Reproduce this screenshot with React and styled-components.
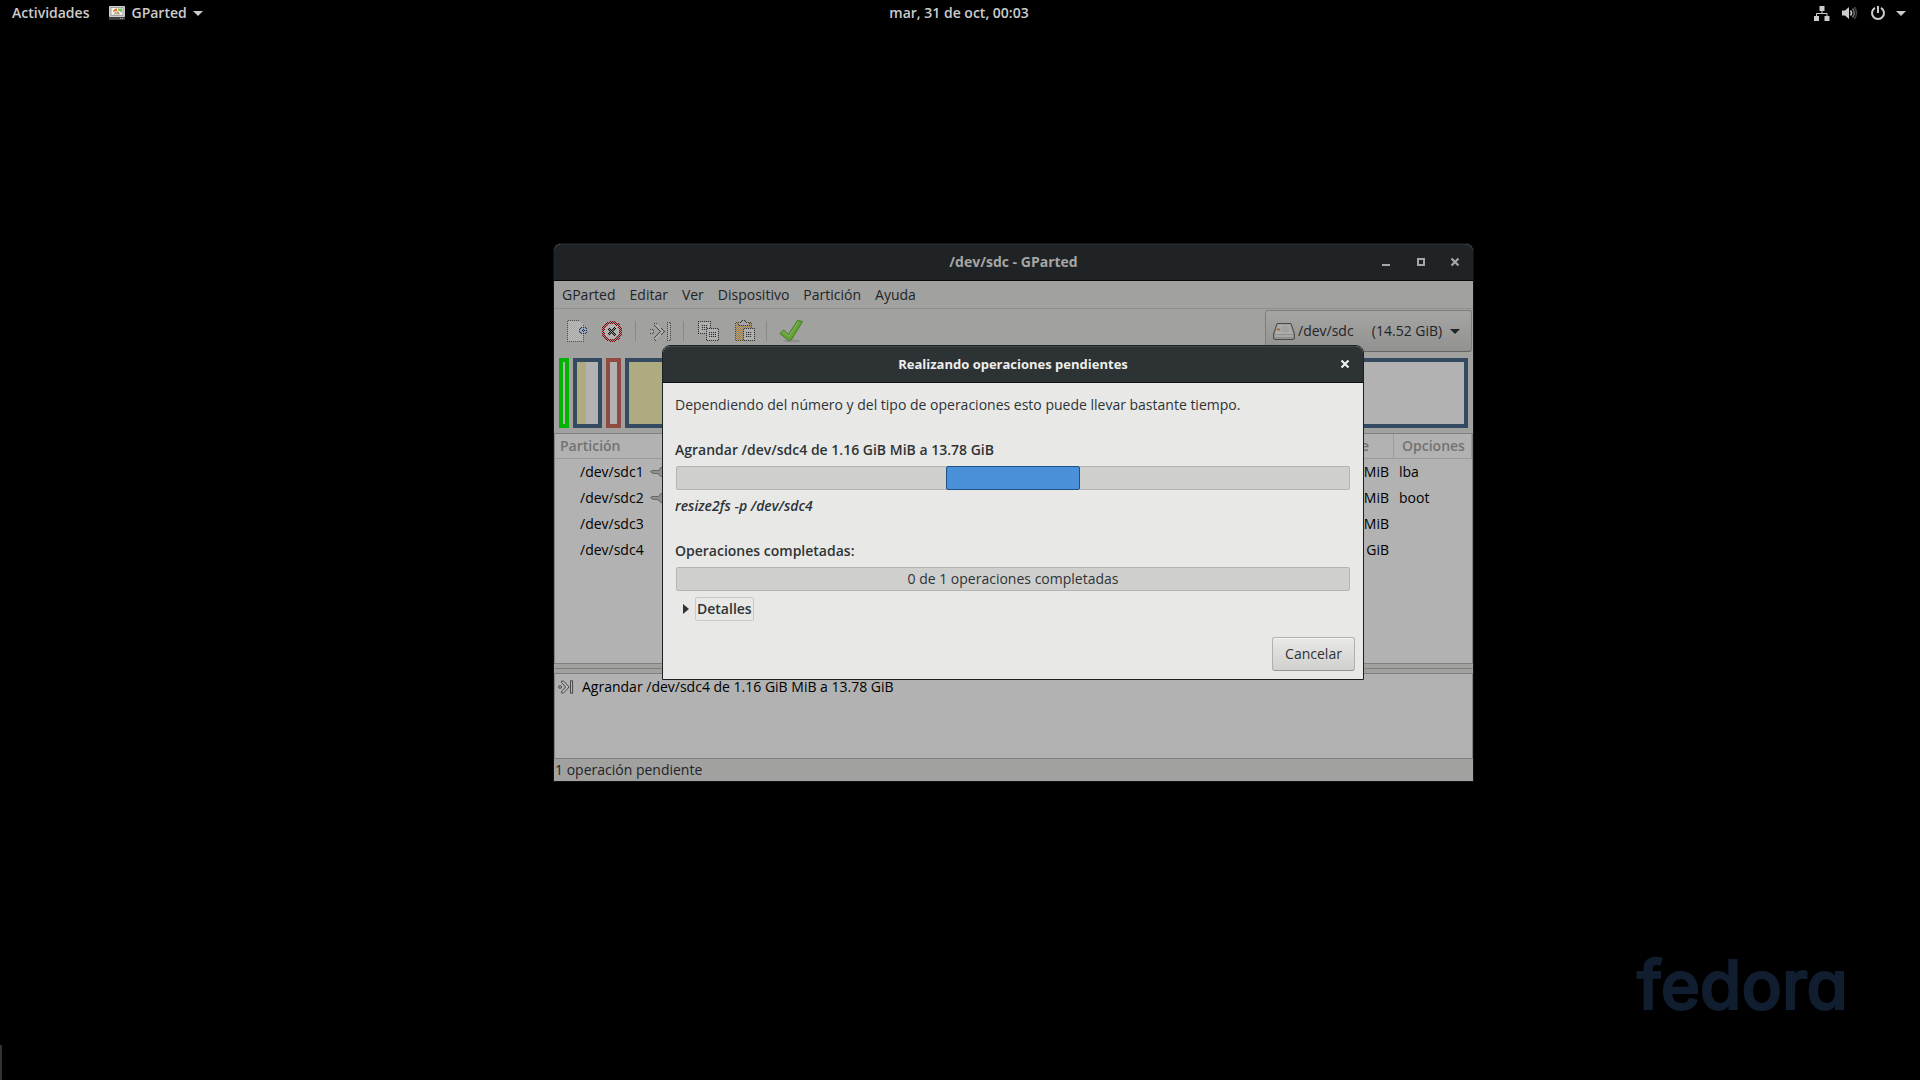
import React from "react";
import styled, { createGlobalStyle } from "styled-components";

const Global = createGlobalStyle`
  * { box-sizing: border-box; }
  body { margin: 0; background: #000; }
  body, button, select { font-family: "Open Sans", "Noto Sans", sans-serif; font-size: 14px; line-height: 20px; }
  button { border: 0; padding: 0; background: none; color: inherit; }
  svg { display: block; flex: none; }
`;

const Desktop = styled.div`
  position: relative;
  display: flex;
  flex-direction: column;
  min-height: 100vh;
  overflow: hidden;
  background: #000;
`;

const TopBar = styled.header`
  display: grid;
  grid-template-columns: 1fr auto 1fr;
  align-items: center;
  height: 27px;
  padding: 0 14px 1px 12px;
  color: #ccc;
`;

const BarGroup = styled.div`
  display: flex;
  align-items: center;
  gap: ${(p) => p.$gap}px;
  justify-content: ${(p) => (p.$end ? "flex-end" : "flex-start")};
`;

const BarButton = styled.button`
  display: flex;
  align-items: center;
  gap: 6px;
  font-size: 14px;
  font-weight: 600;
`;

const StatusButton = styled(BarButton)`
  gap: 10px;
`;

const EdgeBar = styled.div`
  position: absolute;
  left: 0;
  bottom: 0;
  width: 2px;
  height: 35px;
  background: #2e3436;
`;

const Wordmark = styled.div`
  align-self: flex-end;
  margin-top: auto;
  margin-right: 72px;
  margin-bottom: 55px;
  font-family: Inter, sans-serif;
  font-size: 67px;
  line-height: 80px;
  font-weight: 500;
  font-feature-settings: "cv11";
  color: #111e30;
  -webkit-text-stroke: 2px #111e30;
`;

const Window = styled.section`
  position: absolute;
  left: 553px;
  top: 243px;
  width: 921px;
  display: flex;
  flex-direction: column;
  border: 1px solid #101213;
  border-radius: 8px 8px 0 0;
  background: #a1a1a0;
  color: #1f2426;
`;

const TitleBar = styled.div`
  display: grid;
  grid-template-columns: 1fr auto 1fr;
  align-items: center;
  height: 37px;
  padding: 0 13px 2px;
  border-top: 1px solid ${(p) => (p.$active ? "#414749" : "#2a2f31")};
  border-bottom: 1px solid ${(p) => (p.$active ? "#0d0f10" : "#080909")};
  border-radius: 7px 7px 0 0;
  background: ${(p) => (p.$active ? "#2d3335" : "#1f2325")};
  color: ${(p) => (p.$active ? "#eeeeec" : "#a5a6a5")};
`;

const Title = styled.h1`
  grid-column: 2;
  margin: 0;
  font-size: ${(p) => (p.$small ? 13 : 14)}px;
  line-height: 20px;
  font-weight: 700;
`;

const Controls = styled.div`
  display: flex;
  justify-content: flex-end;
  gap: 23px;
`;

const MenuBar = styled.nav`
  display: flex;
  gap: 14px;
  height: 28px;
  padding: 3px 8px;
  border-bottom: 1px solid #8e8f8d;
`;

const Toolbar = styled.div`
  display: flex;
  align-items: center;
  height: 44px;
  padding: 0 1px 0 5px;
`;

const ToolButton = styled.button`
  display: flex;
  justify-content: center;
  width: 35px;
`;

const Separator = styled.span`
  width: 1px;
  height: 20px;
  margin: 0 6px;
  background: #898a88;
`;

const DevicePicker = styled.label`
  display: flex;
  align-items: center;
  gap: 3px;
  width: 207px;
  height: 42px;
  margin-left: auto;
  padding: 0 11px 0 7px;
  border: 1px solid #7d7e7b;
  border-bottom-color: #666764;
  border-radius: 3px;
  background: linear-gradient(#a5a5a4, #91918f);
`;

const DeviceSelect = styled.select`
  flex: 1;
  min-width: 0;
  appearance: none;
  border: 0;
  padding: 0;
  background: none;
  color: #1f2426;
  white-space: pre;
`;

const DiskMap = styled.div`
  display: flex;
  gap: 4px;
  height: 80px;
  padding: 5px;
`;

const Segment = styled.div`
  flex: ${(p) => (p.$width ? `0 0 ${p.$width}px` : "1")};
  border: 4px solid ${(p) => p.$color};
  background: #b2b2b2;
`;

const Used = styled.div`
  width: ${(p) => p.$width}px;
  height: 100%;
  background: #afab80;
`;

const Panel = styled.div`
  height: ${(p) => p.$height}px;
  border: 1px solid #80817f;
  background: #b2b2b2;
  color: #000;
`;

const Partitions = styled.table`
  width: 100%;
  border-collapse: separate;
  border-spacing: 0;
  table-layout: fixed;
`;

const HeadCell = styled.th`
  width: ${(p) => (p.$width ? `${p.$width}px` : "auto")};
  height: 25px;
  padding: 0 ${(p) => (p.$end ? 24 : 5)}px 0 ${(p) => (p.$last ? 8 : 5)}px;
  border-right: 1px solid #9b9b9a;
  border-bottom: 1px solid #9b9b9a;
  color: #727372;
  font-weight: 600;
  text-align: ${(p) => (p.$end ? "right" : "left")};
`;

const Cell = styled.td`
  height: 26px;
  padding: 0 5px;
  text-align: ${(p) => (p.$end ? "right" : "left")};
`;

const DeviceName = styled.span`
  display: flex;
  align-items: center;
  gap: 6px;
  padding-left: 20px;
`;

const Splitter = styled.div`
  height: 9px;
  padding-top: 4px;
  &::before { content: ""; display: block; height: 1px; background: #80817f; }
`;

const Operation = styled.div`
  display: flex;
  align-items: center;
  gap: 8px;
  height: 26px;
  padding-left: 3px;
`;

const StatusLine = styled.footer`
  height: 22px;
  padding: 1px;
`;

const Dialog = styled.div`
  position: absolute;
  top: 101px;
  left: 108px;
  width: 702px;
  border: 1px solid #1d2021;
  border-radius: 8px 8px 0 0;
  background: #e8e8e6;
  color: #2e3436;
`;

const DialogBody = styled.div`
  display: flex;
  flex-direction: column;
  gap: 6px;
  padding: 12px 8px 8px 12px;
`;

const Heading = styled.h2`
  margin: 19px 0 0;
  font-size: 14px;
  line-height: 20px;
  font-weight: 600;
`;

const Note = styled.p`
  margin: 0;
  font-weight: ${(p) => (p.$command ? 600 : 400)};
  font-style: ${(p) => (p.$command ? "italic" : "normal")};
`;

const Progress = styled.div`
  display: flex;
  justify-content: center;
  height: 24px;
  margin: 0 5px 0 1px;
  border: 1px solid #b4b5b2;
  border-radius: 2px;
  background: #cfcfcd;
  line-height: 22px;
`;

const Pulse = styled.span`
  width: 20%;
  margin: -1px 0;
  border: 1px solid #1f5287;
  border-radius: 2px;
  background: #4a90d9;
`;

const Expander = styled.button`
  display: flex;
  align-items: center;
  align-self: flex-start;
  gap: 6px;
  padding-left: 8px;
  font-weight: 600;
`;

const ExpanderLabel = styled.span`
  padding: 1px;
  border: 1px solid #c9cacb;
  border-radius: 2px;
`;

const CancelButton = styled.button`
  align-self: flex-end;
  width: 83px;
  height: 34px;
  margin-top: 10px;
  border: 1px solid #b0b1ae;
  border-bottom-color: #979894;
  border-radius: 3px;
  background: linear-gradient(#e8e8e6, #d0d0ce);
  box-shadow: inset 0 1px #f6f6f5;
`;

const Caret = ({ w = 10 }) => (
  <svg width={w} height="5" viewBox="0 0 10 5"><path d="M0 0h10L5 5z" fill="currentColor" /></svg>
);

const CloseIcon = () => (
  <svg width="10" height="10" viewBox="0 0 10 10"><path d="M1.5 1.5l7 7M8.5 1.5l-7 7" stroke="currentColor" strokeWidth="2.2" /></svg>
);

const AppIcon = () => (
  <svg width="16" height="14" viewBox="0 0 16 14">
    <rect width="16" height="11" rx="1" fill="#d0d0cc" />
    <rect x="2" y="1.500" width="12" height="8" fill="#f4f4ee" stroke="#777" strokeWidth=".6" />
    <path d="M4 6a4 4 0 0 1 4-3.500V5z" fill="#e8742c" />
    <path d="M9 2.500h4v4l-4-2z" fill="#78c850" />
    <path d="M4 8.500l3-3 4 3z" fill="#b8b890" />
    <path d="M8 5l3 2.500H9z" fill="#c84848" />
    <rect y="11" width="16" height="3" fill="#3c3f40" />
    <path d="M11 12.500h1m1 0h1" stroke="#aaa" />
  </svg>
);

const NetworkIcon = () => (
  <svg width="16" height="16" viewBox="0 0 16 16" fill="#ccc">
    <path d="M5.500 1h5v5h-5zM0 11h5v5H0zM10.500 11h5v5h-5z" />
    <path d="M8 5v3.500M2.500 11.500v-3h10.500v3" fill="none" stroke="#ccc" />
  </svg>
);

const VolumeIcon = () => (
  <svg width="16" height="16" viewBox="0 0 16 16" fill="none">
    <path d="M0 5.500h3L7 2v12l-4-3.500H0z" fill="#ccc" />
    <path d="M8.500 5.500q2 2.500 0 5" stroke="#ccc" strokeWidth="1.500" />
    <path d="M10.500 3.500q3.500 4.500 0 9" stroke="#777" strokeWidth="1.500" />
    <path d="M12.500 2q4 6 0 12" stroke="#444" strokeWidth="1.500" />
  </svg>
);

const PowerIcon = () => (
  <svg width="16" height="16" viewBox="0 0 16 16" fill="none" stroke="#ccc" strokeWidth="2">
    <path d="M5 2.800A6 6 0 1 0 11 2.800M8 1v7" />
  </svg>
);

const DitherDefs = () => (
  <svg width="0" height="0">
    <defs>
      <pattern id="checker" width="2" height="2" patternUnits="userSpaceOnUse">
        <path d="M0 0h1v1H0zM1 1h1v1H1z" fill="#fff" />
      </pattern>
      <mask id="dither" maskUnits="userSpaceOnUse" x="0" y="0" width="24" height="24">
        <rect width="24" height="24" fill="#fff" fillOpacity=".1" />
        <rect width="24" height="24" fill="url(#checker)" />
      </mask>
    </defs>
  </svg>
);

const ToolIcon = ({ children, dithered }) => (
  <svg width="24" height="24" viewBox="0 0 24 24" shapeRendering={dithered ? "crispEdges" : "auto"}>
    <g mask={dithered ? "url(#dither)" : undefined}>{children}</g>
  </svg>
);

const NewIcon = () => (
  <ToolIcon dithered>
    <path d="M2.500 1.500h12l4 4v17h-16z" fill="#c0c0c0" stroke="#555" />
    <circle cx="18" cy="11.500" r="3.500" fill="#9fb0c4" stroke="#1c3b66" />
    <path d="M18 9v5M15.500 11.500h5" stroke="#1c3b66" />
  </ToolIcon>
);

const StopIcon = () => (
  <ToolIcon dithered>
    <circle cx="12" cy="12.500" r="9" fill="#c0bfbe" stroke="#7d0d10" strokeWidth="3" />
    <path d="M8.500 9l7 7M15.500 9l-7 7" stroke="#111" strokeWidth="3" />
  </ToolIcon>
);

const ResizeShape = () => (
  <>
    <circle cx="4" cy="12.500" r="2" />
    <path d="M6 4h3l8 8.500L9 21H6v-2l6-6.500L6 6zM19 3.500h3v18h-3z" />
  </>
);

const ResizeTool = () => (
  <ToolIcon dithered><g fill="#b4b4b4" stroke="#4c4c4c"><ResizeShape /></g></ToolIcon>
);

const CopyIcon = () => (
  <ToolIcon dithered>
    <g fill="#bbb" stroke="#333">
      <path d="M2.500 2.500h12v12h-12z" /><path d="M5 6h7M5 8h7M5 10h7" />
      <path d="M10.500 9.500h12v12h-12z" /><path d="M13 13h7M13 15h7M13 17h7" />
    </g>
  </ToolIcon>
);

const PasteIcon = () => (
  <ToolIcon dithered>
    <path d="M4.500 3.500h16v18h-16z" fill="#a9813f" stroke="#60451c" />
    <path d="M7 6h11V3h-3l-1-2h-3l-1 2H7z" fill="#aaa" stroke="#333" />
    <path d="M12.500 9.500h11v12h-11z" fill="#bbb" stroke="#333" />
    <path d="M15 13h6M15 15h6M15 17h6" stroke="#333" />
  </ToolIcon>
);

const ApplyIcon = () => (
  <ToolIcon>
    <ellipse cx="13" cy="22" rx="9" ry="1.500" fill="#8d8d8c" />
    <path d="M1 14.500l3.500-3.500 5 4.500L18.500 1.500l5 1L12.500 20.500l-3 1z" fill="#65a23a" stroke="#3e7f16" strokeLinejoin="round" />
    <path d="M3 14.300l1.500-1.500 5.300 4.500L19.200 3" fill="none" stroke="#85b560" />
  </ToolIcon>
);

const DiskIcon = () => (
  <svg width="22" height="17" viewBox="0 0 22 17">
    <path d="M4 .5h14L21.500 11v4q0 1.500-1.500 1.500H2Q.5 16.500.5 15v-4z" fill="#8f8f8e" stroke="#4c4d4c" />
    <path d="M5 1.500h12L20 11H2z" fill="#adadac" />
    <ellipse cx="12" cy="6" rx="4.500" ry="3.500" fill="#a2a2a1" />
    <path d="M2 13h18" stroke="#c0c0bf" />
    <path d="M4 5.500h3v2H4z" fill="#b5651d" />
  </svg>
);

const KeyIcon = () => (
  <svg width="16" height="12" viewBox="0 0 16 12">
    <path d="M.5 5.500L2 4.500h7Q10 1 12.500 1q3 .5 3 5t-3 5Q10 11 9 8H7.500L7 7 6 8 5 7 4 8 3 7H2z" fill="#90918f" stroke="#686967" />
  </svg>
);

const partitions = [
  { name: "/dev/sdc1", unit: "MiB", flags: "lba", mounted: true },
  { name: "/dev/sdc2", unit: "MiB", flags: "boot", mounted: true },
  { name: "/dev/sdc3", unit: "MiB", flags: "" },
  { name: "/dev/sdc4", unit: "GiB", flags: "" },
];

const menus = ["GParted", "Editar", "Ver", "Dispositivo", "Partición", "Ayuda"];

export default function App() {
  return (
    <Desktop>
      <Global />
      <TopBar>
        <BarGroup $gap={20}>
          <BarButton>Actividades</BarButton>
          <BarButton><AppIcon />GParted<Caret /></BarButton>
        </BarGroup>
        <BarButton>mar, 31 de oct, 00:03</BarButton>
        <BarGroup $end $gap={0}>
          <StatusButton aria-label="Sistema">
            <BarGroup $gap={12}><NetworkIcon /><VolumeIcon /><PowerIcon /></BarGroup>
            <Caret />
          </StatusButton>
        </BarGroup>
      </TopBar>

      <Window>
        <TitleBar>
          <Title>/dev/sdc - GParted</Title>
          <Controls>
            <button aria-label="Minimizar"><svg width="12" height="10" viewBox="0 0 12 10"><path d="M2 8h8" stroke="currentColor" strokeWidth="2" /></svg></button>
            <button aria-label="Maximizar"><svg width="12" height="10" viewBox="0 0 12 10"><path d="M3 2h6v6H3z" fill="none" stroke="currentColor" strokeWidth="2" /></svg></button>
            <button aria-label="Cerrar"><CloseIcon /></button>
          </Controls>
        </TitleBar>
        <MenuBar>{menus.map((m) => <button key={m}>{m}</button>)}</MenuBar>
        <Toolbar>
          <DitherDefs />
          <ToolButton aria-label="Nueva"><NewIcon /></ToolButton>
          <ToolButton aria-label="Borrar"><StopIcon /></ToolButton>
          <Separator />
          <ToolButton aria-label="Redimensionar"><ResizeTool /></ToolButton>
          <Separator />
          <ToolButton aria-label="Copiar"><CopyIcon /></ToolButton>
          <ToolButton aria-label="Pegar"><PasteIcon /></ToolButton>
          <Separator />
          <ToolButton aria-label="Aplicar"><ApplyIcon /></ToolButton>
          <DevicePicker>
            <DiskIcon />
            <DeviceSelect aria-label="Dispositivo">
              <option>{"/dev/sdc\u00a0\u00a0\u00a0\u00a0\u00a0(14.52 GiB)"}</option>
            </DeviceSelect>
            <Caret />
          </DevicePicker>
        </Toolbar>
        <DiskMap>
          <Segment $width={10} $color="#00b400" />
          <Segment $width={29} $color="#344a61"><Used $width={9} /></Segment>
          <Segment $width={15} $color="#8f4a42" />
          <Segment $color="#344a61"><Used $width={78} /></Segment>
        </DiskMap>
        <Panel $height={231}>
          <Partitions>
            <thead>
              <tr>
                <HeadCell>Partición</HeadCell>
                <HeadCell $width={120} $end>Libre</HeadCell>
                <HeadCell $width={78} $last>Opciones</HeadCell>
              </tr>
            </thead>
            <tbody>
              {partitions.map((p) => (
                <tr key={p.name}>
                  <Cell><DeviceName>{p.name}{p.mounted && <KeyIcon />}</DeviceName></Cell>
                  <Cell $end>{p.unit}</Cell>
                  <Cell>{p.flags}</Cell>
                </tr>
              ))}
            </tbody>
          </Partitions>
        </Panel>
        <Splitter />
        <Panel $height={86}>
          <Operation>
            <svg width="16" height="16" viewBox="1 1 23 23" fill="#b8b8b8" stroke="#444" strokeWidth="1.4"><ResizeShape /></svg>
            Agrandar /dev/sdc4 de 1.16 GiB MiB a 13.78 GiB
          </Operation>
        </Panel>
        <StatusLine>1 operación pendiente</StatusLine>

        <Dialog role="dialog" aria-label="Realizando operaciones pendientes">
          <TitleBar $active>
            <Title $small>Realizando operaciones pendientes</Title>
            <Controls><button aria-label="Cerrar diálogo"><CloseIcon /></button></Controls>
          </TitleBar>
          <DialogBody>
            <Note>Dependiendo del número y del tipo de operaciones esto puede llevar bastante tiempo.</Note>
            <Heading>Agrandar /dev/sdc4 de 1.16 GiB MiB a 13.78 GiB</Heading>
            <Progress role="progressbar" aria-label="Operación actual"><Pulse /></Progress>
            <Note $command>resize2fs -p /dev/sdc4</Note>
            <Heading>Operaciones completadas:</Heading>
            <Progress role="progressbar" aria-label="Operaciones completadas" aria-valuenow={0} aria-valuemax={1}>0 de 1 operaciones completadas</Progress>
            <Expander aria-expanded="false">
              <svg width="6" height="10" viewBox="0 0 6 10"><path d="M0 0l6 5-6 5z" fill="currentColor" /></svg>
              <ExpanderLabel>Detalles</ExpanderLabel>
            </Expander>
            <CancelButton>Cancelar</CancelButton>
          </DialogBody>
        </Dialog>
      </Window>

      <Wordmark>fedora</Wordmark>
      <EdgeBar />
    </Desktop>
  );
}
